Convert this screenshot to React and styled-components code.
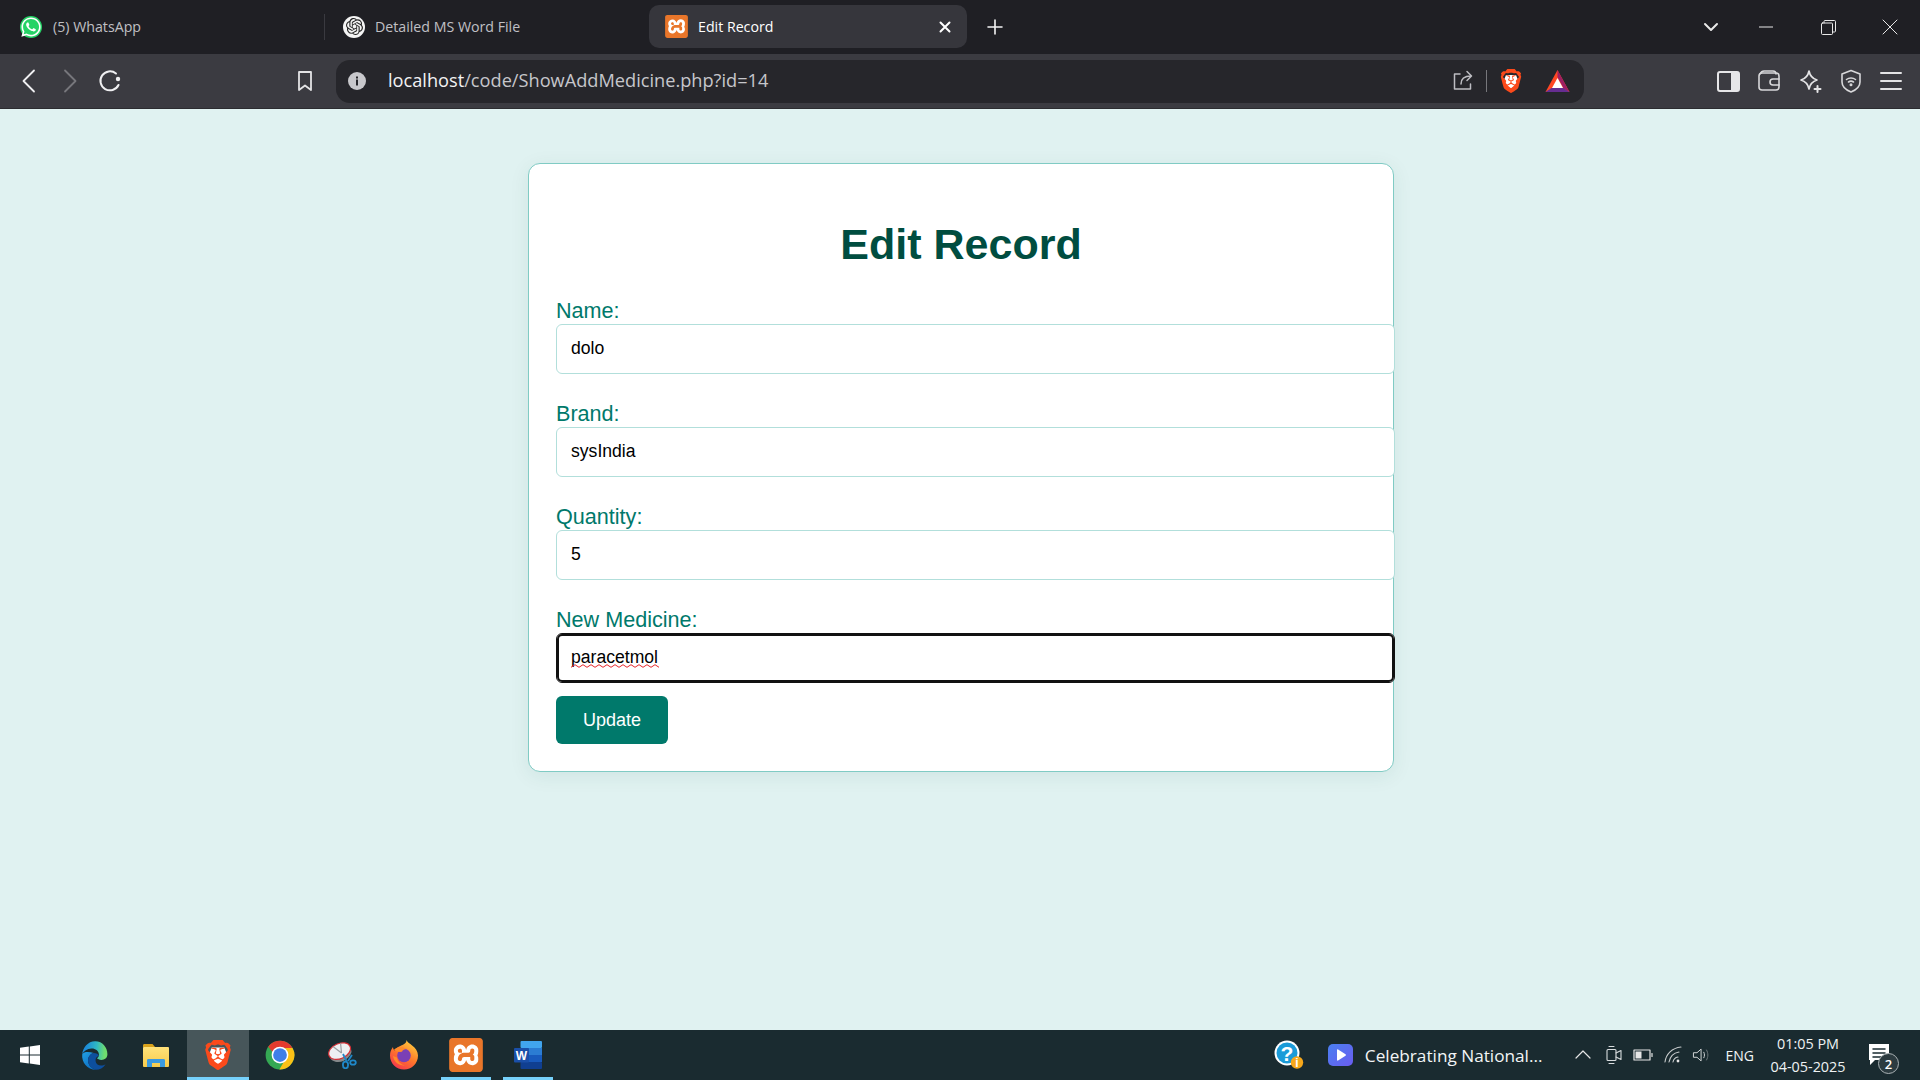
import React from 'react';
import styled, { createGlobalStyle } from 'styled-components';
import { FaWhatsapp } from 'react-icons/fa';
import { SiOpenai, SiBrave, SiXampp } from 'react-icons/si';

const GlobalStyle = createGlobalStyle`
  html, body {
    margin: 0;
    height: 100%;
    overflow: hidden;
    background: #e0f2f1;
    font-family: "Liberation Sans", Arial, sans-serif;
  }
`;

const uiFont = `"Open Sans", "Noto Sans", sans-serif`;

const Screen = styled.div`
  display: flex;
  flex-direction: column;
  height: 100vh;
`;

/* browser chrome */
const TabBar = styled.div`
  display: flex;
  align-items: flex-start;
  height: 54px;
  flex: none;
  background: #1f1f24;
`;

const Tab = styled.div`
  display: flex;
  align-items: center;
  box-sizing: border-box;
  width: ${p => p.$width}px;
  height: 43px;
  margin-top: 5px;
  padding-left: ${p => p.$pad}px;
  gap: ${p => p.$gap}px;
  border-radius: 10px;
  background: ${p => (p.$active ? '#36363c' : 'transparent')};
  color: ${p => (p.$active ? '#fff' : '#c0c0c4')};
  font: 14.2px ${uiFont};
  position: relative;
`;

const TabDivider = styled.div`
  width: 1px;
  height: 26px;
  margin-top: 14px;
  background: #3a3a40;
`;

const TabTitle = styled.span`
  flex: 1;
  white-space: nowrap;
`;

const TabClose = styled.div`
  display: flex;
  width: 16px;
  margin-right: 14px;
`;

const IconSlot = styled.div`
  display: flex;
  align-items: center;
  justify-content: center;
  flex: none;
  width: ${p => p.$w}px;
  height: ${p => p.$h || 30}px;
  margin-left: ${p => p.$ml || 0}px;
  margin-right: ${p => p.$mr || 0}px;
  margin-top: ${p => p.$mt || 0}px;
`;

const FavBadge = styled.div`
  display: flex;
  align-items: center;
  justify-content: center;
  width: ${p => p.$size}px;
  height: ${p => p.$size}px;
  flex: none;
  border-radius: ${p => p.$radius};
  background: ${p => p.$bg};
  color: ${p => p.$color};
`;

const Spacer = styled.div`
  flex: 1;
`;

const Toolbar = styled.div`
  display: flex;
  align-items: center;
  box-sizing: border-box;
  height: 55px;
  flex: none;
  padding-left: 9px;
  background: #3b3b41;
  border-bottom: 1px solid #2c2c30;
`;

const UrlBar = styled.div`
  display: flex;
  align-items: center;
  box-sizing: border-box;
  width: 1248px;
  height: 43px;
  margin-left: 11px;
  padding: 0 14px 0 11px;
  border-radius: 14px;
  background: #26262b;
`;

const UrlText = styled.div`
  margin: 0 0 2px 21px;
  font: 18.2px ${uiFont};
  color: #c6c6cb;
  white-space: nowrap;
`;

const UrlHost = styled.span`
  color: #f2f2f4;
`;

const UrlDivider = styled.div`
  width: 1px;
  height: 22px;
  margin: 0 11px;
  background: #77777c;
`;

/* the page itself */
const Main = styled.main`
  flex: 1;
  display: flex;
  justify-content: center;
  align-items: flex-start;
  padding: 54px 0 0 2px;
  background: #e0f2f1;
`;

const Card = styled.form`
  box-sizing: border-box;
  width: 866px;
  padding: 27px;
  border: 1px solid #80cbc4;
  border-radius: 12px;
  background: #fff;
  box-shadow: 0 4px 20px rgba(0, 77, 64, 0.08);
`;

const Title = styled.h1`
  margin: 28px 0 30px;
  font-size: 43px;
  line-height: 50px;
  font-weight: 700;
  text-align: center;
  color: #004d40;
`;

const Field = styled.div`
  margin-bottom: 28px;

  &:last-of-type {
    margin-bottom: 13px;
  }
`;

const Label = styled.label`
  display: block;
  margin-bottom: 2px;
  font-size: 21.6px;
  line-height: 23px;
  color: #00796b;
`;

const InputWrap = styled.div`
  position: relative;
`;

const Input = styled.input`
  display: block;
  box-sizing: border-box;
  width: 839px;
  height: 50px;
  padding: 0 14px 2px;
  border: 1px solid ${p => (p.$focused ? '#111' : '#b2dfdb')};
  border-radius: 6px;
  outline: none;
  background: #fff;
  color: #000;
  font: 17.6px "Liberation Sans", Arial, sans-serif;
  box-shadow: ${p => (p.$focused ? 'inset 0 0 0 2px #111' : 'none')};
`;

const Squiggle = styled.svg`
  position: absolute;
  left: 15px;
  top: 31px;
  pointer-events: none;
`;

const SubmitButton = styled.button`
  display: block;
  width: 112px;
  height: 48px;
  padding: 0;
  border: none;
  border-radius: 6px;
  background: #00796b;
  color: #fff;
  font: 18px "Liberation Sans", Arial, sans-serif;
`;

/* windows taskbar */
const Taskbar = styled.footer`
  display: flex;
  align-items: center;
  height: 50px;
  flex: none;
  background: #1a2b30;
`;

const TaskItem = styled.div`
  display: flex;
  align-items: center;
  justify-content: center;
  box-sizing: border-box;
  flex: none;
  width: 62px;
  height: 50px;
  position: relative;
  background: ${p => (p.$active ? '#47565a' : 'transparent')};

  &::after {
    content: '';
    display: ${p => (p.$active || p.$open ? 'block' : 'none')};
    position: absolute;
    bottom: 0;
    left: ${p => (p.$active ? 0 : 6)}px;
    right: ${p => (p.$active ? 0 : 6)}px;
    height: 3px;
    background: #76d1fb;
  }
`;

const StartSlot = styled(TaskItem)`
  margin-right: 1px;
  padding-right: 2px;
`;

const TrayText = styled.div`
  margin-left: ${p => p.$ml || 0}px;
  font: ${p => p.$size}px ${uiFont};
  color: #f2f5f6;
  white-space: nowrap;
`;

const Clock = styled.div`
  display: flex;
  flex-direction: column;
  align-items: center;
  width: 84px;
  margin-left: 12px;
  font: 14.4px/23px ${uiFont};
  color: #eef2f3;
  white-space: nowrap;
`;

const NotifWrap = styled.div`
  position: relative;
  width: 24px;
  height: 24px;
  margin-left: 17px;
`;

const NotifBadge = styled.div`
  position: absolute;
  right: -8px;
  bottom: -7px;
  display: flex;
  align-items: center;
  justify-content: center;
  width: 19px;
  height: 19px;
  border: 1.5px solid #aab2b4;
  border-radius: 50%;
  background: #2c3b40;
  color: #fff;
  font: 600 13px ${uiFont};
`;

const BraveLogo = ({ size }) => (
  <svg width={size} height={size} viewBox="0 0 24 24">
    <path d="M7 6h10l2 5-3 7-4 3-4-3-3-7z" fill="#fff" />
    <SiBrave x="0" y="0" size={24} color="#fb4a1b" />
  </svg>
);

const XamppLogo = ({ size }) => (
  <svg width={size} height={size} viewBox="0 0 24 24">
    <rect x="3" y="3" width="18" height="18" fill="#fff" />
    <SiXampp x="0" y="0" size={24} color="#e9762a" />
  </svg>
);

const BatLogo = () => (
  <svg width="25" height="24" viewBox="0 0 25 24">
    <path d="M12.500 1 24.500 23H.5z" fill="#ff4724" />
    <path d="M12.500 1 24.500 23l-6-3.800L12.500 8z" fill="#9e1f63" />
    <path d="M.500 23h24l-6-4H6.500z" fill="#662d91" />
    <path d="M12.500 9 18 19H7z" fill="#fff" />
  </svg>
);

const Line = ({ w = 24, h = 24, d, color = '#e6e6e8', sw = 1.8, children }) => (
  <svg width={w} height={h} viewBox={`0 0 ${w} ${h}`} fill="none" stroke={color} strokeWidth={sw} strokeLinecap="round" strokeLinejoin="round">
    {d && <path d={d} />}
    {children}
  </svg>
);

const EdgeLogo = () => (
  <svg width="31" height="31" viewBox="0 0 24 24">
    <defs>
      <linearGradient id="edgeTop" x1="0.9" y1="0.45" x2="0.15" y2="0.4">
        <stop offset="0" stopColor="#6fdc6e" />
        <stop offset="0.45" stopColor="#2fb8c4" />
        <stop offset="1" stopColor="#1c8bd8" />
      </linearGradient>
      <linearGradient id="edgeLow" x1="0.2" y1="0" x2="0.8" y2="1">
        <stop offset="0" stopColor="#1f9be0" />
        <stop offset="1" stopColor="#0c6ac0" />
      </linearGradient>
    </defs>
    <path d="M2.500 11C3 6 6.800 1 12.500 1 18.300 1 22 5.800 22 11c0 2.800-2.200 4.400-4.600 4.400-1.700 0-3-.5-3.500-1.200 1.200-.8 1.700-2 1.500-3.400C15 8.300 12.500 6.400 9.600 6.600 6.300 6.800 3.700 8.400 2.500 11z" fill="url(#edgeTop)" />
    <path d="M2.500 11C1.800 17.300 6.500 23 13 23c-3.800-1.300-6.200-4.300-6-7.600.2-2.700 2-4.900 4.500-5.400C8 9 4 8.600 2.500 11z" fill="url(#edgeLow)" />
    <path d="M13 23c-3.800-1.300-6.200-4.300-6-7.600.2-2.700 2-4.900 4.500-5.400 1.800 0 3.600.8 3.900 2.200-1.600.4-2.800 2-2.600 4 .3 2.800 3 4 5.400 3.500.9-.2 1.700-.6 2.400-1-1.800 2.800-4.600 4.300-7.600 4.300z" fill="#0d4f9e" />
  </svg>
);

const ExplorerLogo = () => (
  <svg width="28" height="28" viewBox="0 0 28 28">
    <defs>
      <linearGradient id="folderBody" x1="0" y1="0" x2="0" y2="1">
        <stop offset="0" stopColor="#ffe27a" />
        <stop offset="1" stopColor="#f8cb4c" />
      </linearGradient>
    </defs>
    <path d="M1 4.500c0-1 .6-1.500 1.500-1.500h8l3 3.500H1z" fill="#d9a21b" />
    <rect x="1" y="6" width="26" height="20" rx="1" fill="url(#folderBody)" />
    <path d="M5 26v-6.500c0-1 .5-1.500 1.500-1.500h15c1 0 1.500.5 1.500 1.500V26h-5v-4h-8v4z" fill="#3b9ae0" />
  </svg>
);

const ChromeLogo = () => (
  <svg width="30" height="30" viewBox="0 0 24 24">
    <circle cx="12" cy="12" r="11.500" fill="#34a853" />
    <path d="M2.600 5.400A11.500 11.500 0 0 1 22 6.300H12a5.700 5.700 0 0 0-5.400 3.900z" fill="#e33b2e" />
    <path d="M22 6.300A11.500 11.500 0 0 1 11.500 23.500l5-8.500a5.700 5.700 0 0 0-.6-8.700z" fill="#fbc116" />
    <circle cx="12" cy="12" r="6.700" fill="#fff" />
    <circle cx="12" cy="12" r="5.500" fill="#3f7fe8" />
  </svg>
);

const SnipLogo = () => (
  <svg width="29" height="28" viewBox="0 0 29 28">
    <g transform="rotate(-24 12 11)">
      <path d="M0.500 12a11.500 8.500 0 0 0 23 0z" fill="#85898b" />
      <ellipse cx="12" cy="10" rx="11.500" ry="7.500" fill="#eef0f2" stroke="#d42f35" strokeWidth="1.200" />
      <path d="M8 3.500l5 9M16 3.500l-3 9" stroke="#9a9ea2" strokeWidth="1.200" fill="none" />
    </g>
    <g fill="none" stroke="#1f88c9" strokeWidth="1.800">
      <path d="M15 13l3.500 7M24 14l-4 6" />
      <ellipse cx="17.500" cy="24" rx="2.600" ry="3.300" />
      <ellipse cx="25" cy="21.500" rx="2.800" ry="2.200" />
    </g>
  </svg>
);

const FirefoxLogo = () => (
  <svg width="30" height="30" viewBox="0 0 30 30">
    <defs>
      <linearGradient id="foxBody" x1="0.8" y1="0" x2="0.2" y2="1">
        <stop offset="0" stopColor="#ffd23f" />
        <stop offset="0.5" stopColor="#ff7a2a" />
        <stop offset="1" stopColor="#f4324f" />
      </linearGradient>
    </defs>
    <path d="M17.500 0c.5 3.500 11.500 6.500 11.500 15.500C29 23.500 22.800 29.500 15 29.500S1 23.500 1 15.500c0-3.500 1-6 3-8.500 0 2 .8 3 2 3.500C8 6.500 11.500 6 13.500 5c2.500-1.200 4-2.500 4-5z" fill="url(#foxBody)" />
    <circle cx="15" cy="15.500" r="6.800" fill="#7b3fb5" />
    <path d="M5 9.500c3.500-2.500 9-3 13-.5-2.500 0-4.500.8-5 2.800-3.500.5-6-.5-8-2.300zM4 16c1 6 6 10 12 9.500-4-1-7.500-4-8-8z" fill="#ff8a2b" />
  </svg>
);

const WordLogo = () => (
  <svg width="28" height="28" viewBox="0 0 28 28">
    <rect x="6.500" y="0" width="21.500" height="7" rx="1" fill="#41a5ee" />
    <rect x="6.500" y="7" width="21.500" height="7" fill="#2b7cd3" />
    <rect x="6.500" y="14" width="21.500" height="7" fill="#185abd" />
    <rect x="6.500" y="21" width="21.500" height="7" rx="1" fill="#103f91" />
    <rect x="0" y="7" width="15" height="14.500" rx="1" fill="#1a4fa8" />
    <text x="7.500" y="19" fontFamily="Liberation Sans" fontWeight="700" fontSize="12" fill="#fff" textAnchor="middle">W</text>
  </svg>
);

const WindowsLogo = () => (
  <svg width="20" height="20" viewBox="0 0 20 20" fill="#fff">
    <path d="M0 2.800 8.800 1.500v8H0zM9.800 1.400 20 0v9.500H9.800zM0 10.500h8.800v8L0 17.200zM9.800 10.500H20V20L9.800 18.600z" />
  </svg>
);

const HelpLogo = () => (
  <svg width="30" height="30" viewBox="0 0 30 30">
    <circle cx="13" cy="13" r="12.500" fill="#fff" />
    <circle cx="13" cy="13" r="10.500" fill="#1b9bd8" />
    <text x="13" y="20.500" fontFamily="Liberation Sans" fontWeight="700" fontSize="21" fill="#fff" textAnchor="middle">?</text>
    <circle cx="23" cy="22.500" r="6.200" fill="#f7a81b" />
    <text x="23" y="27" fontFamily="Liberation Sans" fontWeight="700" fontSize="12" fill="#fff" textAnchor="middle">i</text>
  </svg>
);

const MeetLogo = () => (
  <svg width="25" height="22" viewBox="0 0 25 22">
    <defs>
      <linearGradient id="meetBg" x1="0" y1="0" x2="1" y2="1">
        <stop offset="0" stopColor="#4a80f0" />
        <stop offset="1" stopColor="#6a5cf0" />
      </linearGradient>
    </defs>
    <rect width="25" height="22" rx="5" fill="url(#meetBg)" />
    <path d="M9 6c0-.6.600-.9 1.100-.6l7.400 4.900c.5.400.5 1 0 1.400l-7.400 4.900c-.5.300-1.100 0-1.100-.6z" fill="#fff" />
  </svg>
);

const squigglePath = Array.from({ length: 23 }, (_, i) => `${i * 4},${i % 2 ? 0.7 : 3.3}`).join(' ');

const fields = [
  { id: 'name', label: 'Name:', value: 'dolo' },
  { id: 'brand', label: 'Brand:', value: 'sysIndia' },
  { id: 'quantity', label: 'Quantity:', value: '5' },
  { id: 'medicine', label: 'New Medicine:', value: 'paracetmol', focused: true, misspelled: true },
];

const App = () => (
  <Screen>
    <GlobalStyle />
    <TabBar>
      <Tab $width={324} $pad={20} $gap={11}>
        <FavBadge $size={22} $radius="50%" $bg="#25d366" $color="#fff">
          <FaWhatsapp size={22} />
        </FavBadge>
        <TabTitle>(5) WhatsApp</TabTitle>
      </Tab>
      <TabDivider />
      <Tab $width={324} $pad={18} $gap={10}>
        <FavBadge $size={22} $radius="50%" $bg="#f4f4f4" $color="#222">
          <SiOpenai size={17} />
        </FavBadge>
        <TabTitle>Detailed MS Word File</TabTitle>
      </Tab>
      <Tab $active $width={318} $pad={16} $gap={10}>
        <XamppLogo size={23} />
        <TabTitle>Edit Record</TabTitle>
        <TabClose>
          <Line w={16} h={16} d="M3.500 3.500l9 9M12.500 3.500l-9 9" color="#fff" sw={2} />
        </TabClose>
      </Tab>
      <IconSlot $w={30} $ml={13} $mt={12}>
        <Line w={18} h={18} d="M9 2v14M2 9h14" color="#f4f4f4" sw={1.6} />
      </IconSlot>
      <Spacer />
      <IconSlot $w={30} $mt={12}>
        <Line w={16} h={16} d="M2 5l6 6 6-6" color="#e8e8e8" sw={2} />
      </IconSlot>
      <IconSlot $w={62} $ml={9} $mt={12}>
        <Line w={14} h={14} d="M0 7h14" color="#e8e8e8" sw={1} />
      </IconSlot>
      <IconSlot $w={62} $mt={12}>
        <Line w={15} h={15} color="#e8e8e8" sw={1}>
          <rect x="0.500" y="3" width="11" height="11.500" rx="1" />
          <path d="M3 3V1.500c0-.6.400-1 1-1h9.500c.6 0 1 .4 1 1V11c0 .6-.4 1-1 1H12" />
        </Line>
      </IconSlot>
      <IconSlot $w={62} $mt={12} $mr={-1}>
        <Line w={16} h={16} d="M1 1l14 14M15 1L1 15" color="#e8e8e8" sw={1} />
      </IconSlot>
    </TabBar>

    <Toolbar>
      <IconSlot $w={40}>
        <Line d="M17 1.500 6.500 12 17 22.500" color="#f0f0f2" />
      </IconSlot>
      <IconSlot $w={41}>
        <Line d="M7 1.500 17.500 12 7 22.500" color="#77777c" />
      </IconSlot>
      <IconSlot $w={40}>
        <Line color="#f0f0f2" sw={2}>
          <path d="M18 4.500A9.500 9.500 0 1 0 20.500 16" />
          <circle cx="20" cy="10" r="2.200" fill="#f0f0f2" stroke="none" />
        </Line>
      </IconSlot>
      <IconSlot $w={40} $ml={155}>
        <Line d="M6 3h12v18l-6-4.500L6 21z" color="#e4e4e6" />
      </IconSlot>
      <UrlBar>
        <IconSlot $w={20} $h={20}>
          <svg width="18" height="18" viewBox="0 0 18 18">
            <circle cx="9" cy="9" r="9" fill="#c8c8cc" />
            <rect x="8" y="7.500" width="2" height="6" fill="#26262b" />
            <rect x="8" y="4.500" width="2" height="2" fill="#26262b" />
          </svg>
        </IconSlot>
        <UrlText>
          <UrlHost>localhost</UrlHost>/code/ShowAddMedicine.php?id=14
        </UrlText>
        <Spacer />
        <IconSlot $w={24}>
          <Line d="M9 5H3.500v15h16v-5M10 15c0-5 3-8 10-8M16 2.500 20.500 7 16 11.500" color="#bdbdc2" sw={1.5} />
        </IconSlot>
        <UrlDivider />
        <IconSlot $w={26}>
          <BraveLogo size={24} />
        </IconSlot>
        <IconSlot $w={26} $ml={20}>
          <BatLogo />
        </IconSlot>
      </UrlBar>
      <IconSlot $w={41} $ml={124}>
        <svg width="23" height="23" viewBox="0 0 23 23">
          <rect x="1" y="2" width="21" height="19" rx="2" fill="none" stroke="#e6e6e8" strokeWidth="2" />
          <rect x="14" y="2" width="8" height="19" fill="#e6e6e8" />
        </svg>
      </IconSlot>
      <IconSlot $w={40}>
        <Line w={24} h={24} color="#d8d8da" sw={1.6}>
          <rect x="2" y="4" width="20" height="17" rx="3" />
          <path d="M3 5c1-2 2-3 4-3h9c2 0 3 1 3 3M22 10h-6a2.500 2.500 0 0 0 0 6h6" />
        </Line>
      </IconSlot>
      <IconSlot $w={41}>
        <Line color="#e4e4e6" d="M11 2c1 5 3 7.500 8 9-5 1.500-7 4-8 9-1-5-3-7.500-8-9 5-1.500 7-4 8-9z" sw={1.7}>
          <path d="M19.500 17v6M16.500 20h6" strokeWidth="2" />
        </Line>
      </IconSlot>
      <IconSlot $w={41}>
        <Line color="#d8d8da" sw={1.6}>
          <path d="M12 1.500 21 5v8c0 5-4 8-9 10-5-2-9-5-9-10V5z" />
          <path d="M7.500 10.500c2.500-2 6.500-2 9 0M9.500 13c1.500-1 3.500-1 5 0" />
          <circle cx="12" cy="15.800" r="0.700" fill="#d8d8da" />
        </Line>
      </IconSlot>
      <IconSlot $w={40}>
        <Line d="M2 4h20M2 12h20M2 20h20" color="#e4e4e6" sw={2} />
      </IconSlot>
    </Toolbar>

    <Main>
      <Card onSubmit={e => e.preventDefault()}>
        <Title>Edit Record</Title>
        {fields.map(field => (
          <Field key={field.id}>
            <Label htmlFor={field.id}>{field.label}</Label>
            <InputWrap>
              <Input
                id={field.id}
                type="text"
                spellCheck={false}
                defaultValue={field.value}
                $focused={field.focused}
              />
              {field.misspelled && (
                <Squiggle width="88" height="4" viewBox="0 0 88 4">
                  <polyline points={squigglePath} fill="none" stroke="#e5262b" strokeWidth="1" />
                </Squiggle>
              )}
            </InputWrap>
          </Field>
        ))}
        <SubmitButton type="submit">Update</SubmitButton>
      </Card>
    </Main>

    <Taskbar>
      <StartSlot>
        <WindowsLogo />
      </StartSlot>
      <TaskItem><EdgeLogo /></TaskItem>
      <TaskItem><ExplorerLogo /></TaskItem>
      <TaskItem $active><BraveLogo size={30} /></TaskItem>
      <TaskItem><ChromeLogo /></TaskItem>
      <TaskItem><SnipLogo /></TaskItem>
      <TaskItem><FirefoxLogo /></TaskItem>
      <TaskItem $open><XamppLogo size={34} /></TaskItem>
      <TaskItem $open><WordLogo /></TaskItem>
      <Spacer />
      <IconSlot $w={30}>
        <HelpLogo />
      </IconSlot>
      <IconSlot $w={25} $ml={24}>
        <MeetLogo />
      </IconSlot>
      <TrayText $ml={12} $size={17.2}>Celebrating National...</TrayText>
      <IconSlot $w={20} $ml={30}>
        <Line w={18} h={18} d="M2 12l7-7 7 7" color="#e6e6e6" sw={1.2} />
      </IconSlot>
      <IconSlot $w={18} $ml={12}>
        <Line w={18} h={20} color="#d8dcde" sw={1.1}>
          <rect x="2" y="4.500" width="9" height="11" rx="1" />
          <path d="M11 8l5-2.500v9L11 12M4 1.500h5M4 18.500h5" />
        </Line>
      </IconSlot>
      <IconSlot $w={20} $ml={10}>
        <Line w={20} h={14} color="#e6e6e6" sw={1.2}>
          <rect x="1" y="2" width="16" height="10" />
          <rect x="2.500" y="3.500" width="6" height="7" fill="#e6e6e6" stroke="none" />
          <path d="M19 5.500v3" />
        </Line>
      </IconSlot>
      <IconSlot $w={20} $ml={10}>
        <Line w={20} h={20} color="#c8cccd" sw={1.1}>
          <path d="M2 17C3 9 9 3 18 2M6 17c1-5 4-9 10-10M10 17c.5-2.500 2-4.500 5-5" />
          <circle cx="15" cy="16" r="1.400" fill="#e6e6e6" stroke="none" />
        </Line>
      </IconSlot>
      <IconSlot $w={20} $ml={9}>
        <Line w={22} h={20} color="#d0d4d5" sw={1.1}>
          <path d="M2 7.500h3.500L10 3.500v13l-4.500-4H2z" />
          <path d="M13 7c1 2 1 4 0 6" />
          <path d="M16 4.500c2 3.500 2 7.500 0 11" stroke="#6d777a" />
        </Line>
      </IconSlot>
      <TrayText $ml={14} $size={14}>ENG</TrayText>
      <Clock>
        <span>01:05 PM</span>
        <span>04-05-2025</span>
      </Clock>
      <NotifWrap>
        <Line w={24} h={24} color="#1a2b30" sw={1.5}>
          <path d="M2 1h20v16H8l-5 5v-5H2z" fill="#fff" stroke="none" />
          <path d="M6 6h12M6 10h12M6 14h8" />
        </Line>
        <NotifBadge>2</NotifBadge>
      </NotifWrap>
      <IconSlot $w={29} />
    </Taskbar>
  </Screen>
);

export default App;
